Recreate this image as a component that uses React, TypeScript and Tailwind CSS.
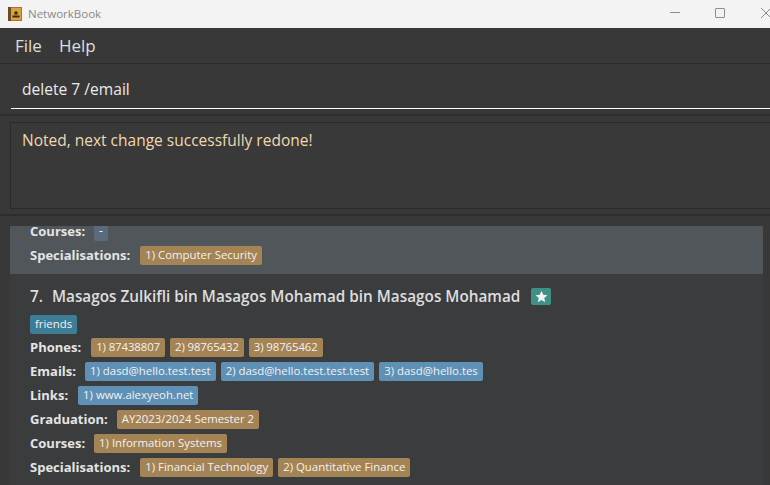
const font = { fontFamily: '"Open Sans", "Noto Sans", sans-serif' };

function Tag({ children, color = "bg-[#a48354]", tight = false }: { children: React.ReactNode; color?: string; tight?: boolean }) {
  return (
    <span className={`${color} ${tight ? "tracking-[-0.1px]" : ""} flex h-[19px] items-center rounded-[2px] px-[5px] text-[11.4px] leading-none text-[#f2f2f2] whitespace-nowrap`}>
      {children}
    </span>
  );
}

function Row({ label, gap, tags, color, tight }: { label: string; gap: string; tags: string[]; color?: string; tight?: boolean }) {
  return (
    <div className="flex h-[24px] items-center">
      <span className={`${gap} text-[13px] leading-none font-bold text-[#e4e4e4]`}>{label}</span>
      <div className="flex gap-[5px]">
        {tags.map((t) => (
          <Tag key={t} color={color} tight={tight}>{t}</Tag>
        ))}
      </div>
    </div>
  );
}

export default function App() {
  return (
    <div style={font} className="flex h-[485px] w-[770px] flex-col overflow-hidden bg-[#383838]">
      <div className="flex h-[28px] shrink-0 items-center bg-[#f3f3f3]">
        <svg width="14" height="14" viewBox="0 0 14 14" className="ml-[8px]">
          <rect x="0" y="0" width="14" height="14" fill="#a8752f" />
          <rect x="0" y="0" width="3" height="14" fill="#6b4a25" />
          <rect x="3" y="1" width="10" height="12" fill="#d9a044" />
          <circle cx="8" cy="6" r="1.8" fill="#3a2a14" />
          <rect x="4.5" y="8.5" width="7" height="2" fill="#3a2a14" />
        </svg>
        <span className="ml-[6px] text-[11.5px] text-[#8a8a8a]">NetworkBook</span>
        <div className="mb-[3px] ml-auto flex items-center">
          <div className="mr-[35px] h-[1px] w-[10px] bg-[#8e8e8e]" />
          <div className="mr-[36px] h-[10px] w-[10px] rounded-[1px] border border-[#8e8e8e]" />
          <svg width="10" height="10" viewBox="0 0 10 10" className="mr-[-1px]">
            <path d="M0 0 L10 10 M10 0 L0 10" stroke="#8e8e8e" strokeWidth="1" />
          </svg>
        </div>
      </div>

      <div className="flex h-[36px] shrink-0 items-center border-b border-[#2c2c2c] pl-[15px] text-[17px] text-[#dedede]">
        <span>File</span>
        <span className="ml-[17px]">Help</span>
      </div>

      <div className="h-[45px] shrink-0 pl-[11px]">
        <div className="flex h-full items-center border-b-[1.5px] border-white pt-[8px] pl-[11px] text-[15.6px] text-[#eaeaea]">
          delete 7 /email
        </div>
      </div>

      <div className="mt-[5px] h-[2px] shrink-0 bg-[#2e2e2e]" />

      <div className="shrink-0 pt-[6px] pl-[10px]">
        <div className="h-[87px] border border-r-0 border-[#2a2a2a] bg-[#393939] pt-[5px] pl-[11px] text-[15.5px] leading-[24px] text-[#f0d8b0]">
          Noted, next change successfully redone!
        </div>
      </div>

      <div className="mt-[5px] h-[2px] shrink-0 bg-[#2e2e2e]" />

      <div className="flex-1 pt-[10px] pr-[7px] pl-[10px]">
        <div className="flex h-[48px] flex-col overflow-hidden bg-[#50565a] pl-[20px]">
          <div className="mt-[-7px] flex h-[24px] items-center">
            <span className="mr-[9px] text-[13px] leading-none font-bold text-[#e4e4e4]">Courses:</span>
            <span className="flex h-[19px] items-center rounded-[2px] bg-[#5a6b7c] px-[5px] text-[12px] leading-none text-[#f2f2f2]">-</span>
          </div>
          <Row label="Specialisations:" gap="mr-[10px]" tags={["1) Computer Security"]} />
        </div>

        <div className="h-[211px] bg-[#3b3c3e] pt-[9px] pl-[20px]">
          <div className="flex h-[26px] items-center text-[15.3px] font-semibold whitespace-pre text-[#dedede]">
            <span>7.</span>
            <span className="ml-[9px]">Masagos Zulkifli bin Masagos Mohamad bin Masagos Mohamad</span>
            <span className="ml-[11px] flex h-[17px] w-[20px] items-center justify-center rounded-[2px] bg-[#3f9188]">
              <svg width="13" height="13" viewBox="0 0 24 24" fill="#f2f2f2">
                <path d="M12 1.5l3.2 7.2 7.8.8-5.9 5.2 1.7 7.7L12 18.4l-6.8 4 1.7-7.7L1 9.5l7.8-.8z" />
              </svg>
            </span>
          </div>
          <div className="mt-[3px] flex h-[24px] items-center">
            <Tag color="bg-[#3d7d98]">friends</Tag>
          </div>
          <div className="mt-[-1px]">
            <Row label="Phones:" gap="mr-[10px]" tight tags={["1) 87438807", "2) 98765432", "3) 98765462"]} />
            <Row label="Emails:" gap="mr-[9px]" color="bg-[#5f90b6]" tags={["1) dasd@hello.test.test", "2) dasd@hello.test.test.test", "3) dasd@hello.tes"]} />
            <Row label="Links:" gap="mr-[10px]" color="bg-[#5f90b6]" tags={["1) www.alexyeoh.net"]} />
            <Row label="Graduation:" gap="mr-[9px]" tags={["AY2023/2024 Semester 2"]} />
            <Row label="Courses:" gap="mr-[9px]" tags={["1) Information Systems"]} />
            <Row label="Specialisations:" gap="mr-[10px]" tags={["1) Financial Technology", "2) Quantitative Finance"]} />
          </div>
        </div>
      </div>
    </div>
  );
}
